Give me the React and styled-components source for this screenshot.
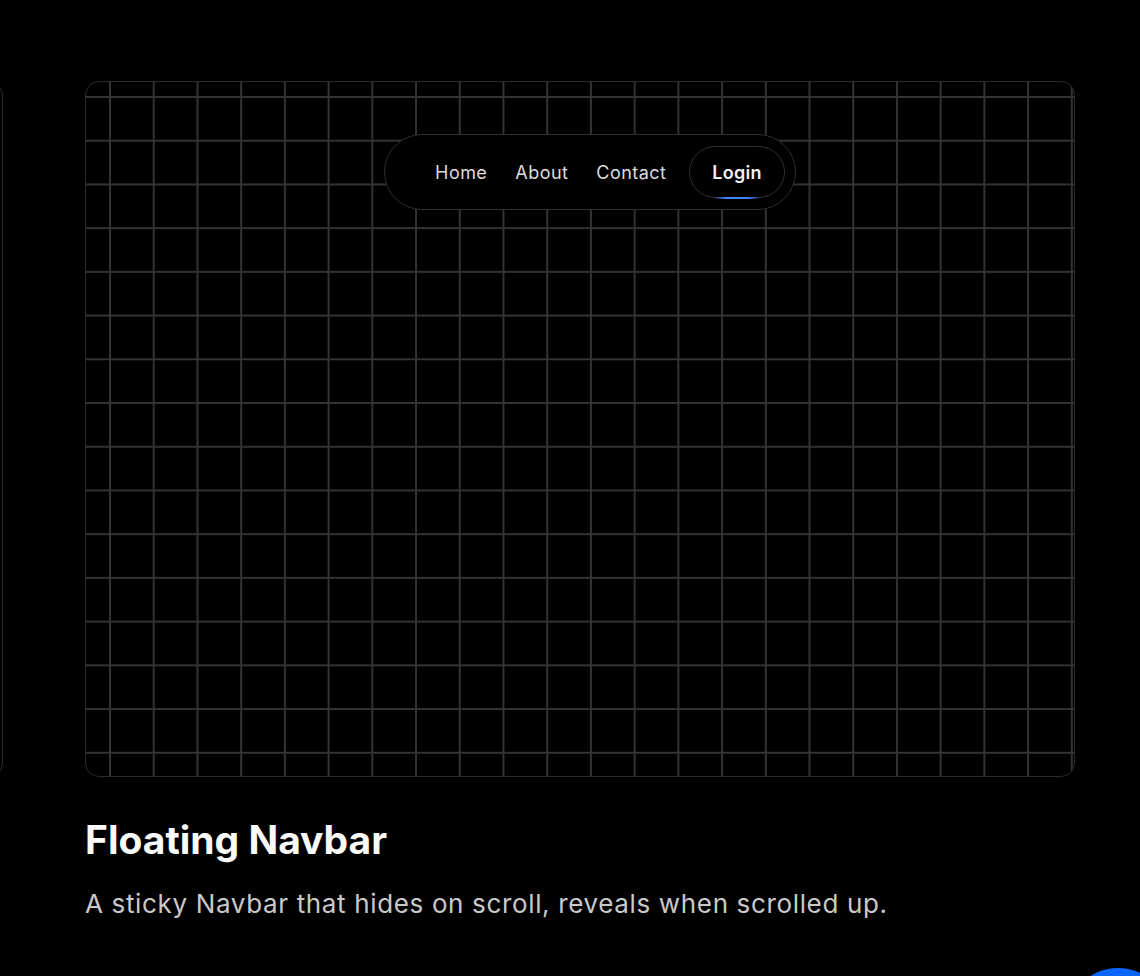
import React from "react";
import styled, { createGlobalStyle, css } from "styled-components";

const Global = createGlobalStyle`
  html, body { margin: 0; padding: 0; background: #000; }
  body { font-family: Inter, "Noto Sans", sans-serif; color: #fff; overflow: hidden; }
  * { box-sizing: border-box; }
`;

const Page = styled.main`
  width: 1140px;
  height: 976px;
  overflow: hidden;
  padding-top: 81px;
`;

const Track = styled.div`
  display: flex;
  gap: 82px;
  transform: translateX(${(p) => p.$offset}px);
`;

const Slide = styled.section`
  flex: 0 0 990px;
  display: flex;
  flex-direction: column;
`;

const Preview = styled.div`
  position: relative;
  height: 696px;
  border: 1px solid #2a2a2a;
  border-radius: 14px;
  overflow: hidden;
  background-color: #000;
  ${(p) =>
    p.$grid &&
    css`
      background-image:
        linear-gradient(to right, #333 1.5px, transparent 1.5px),
        linear-gradient(to bottom, #333 1.5px, transparent 1.5px);
      background-size: 43.73px 43.73px;
      background-position: 23px 14px;
    `}
  display: flex;
  justify-content: center;
  align-items: flex-start;
  padding-top: 52px;
`;

const Nav = styled.nav`
  display: flex;
  align-items: center;
  height: 76px;
  padding: 0 10px 0 36px;
  margin-left: 20px;
  background: #000;
  border: 1.5px solid #2e2e2e;
  border-radius: 999px;
`;

const NavLink = styled.a`
  padding: 0 14px;
  font-size: 18px;
  color: #dcdcdc;
  text-decoration: none;
  letter-spacing: 0.45px;
`;

const LoginButton = styled.button`
  position: relative;
  margin-left: 9px;
  height: 52px;
  padding: 0 22px;
  border-radius: 999px;
  border: 1.5px solid #313131;
  background: #000;
  color: #f2f2f2;
  font-family: Inter, "Noto Sans", sans-serif;
  font-size: 18px;
  font-weight: 600;
  letter-spacing: 0.3px;

  &::after {
    content: "";
    position: absolute;
    left: 50%;
    bottom: -1.5px;
    width: 46px;
    height: 2px;
    transform: translateX(-50%);
    background: linear-gradient(to right, transparent, #3d7eff 25%, #4a88ff 50%, #3d7eff 75%, transparent);
  }
`;

const Title = styled.h2`
  margin: 40px 0 0;
  font-size: 39px;
  font-weight: 700;
  line-height: 46px;
  color: #fafafa;
  letter-spacing: 0px;
`;

const Description = styled.p`
  margin: 23px 0 0;
  font-size: 26px;
  line-height: 36px;
  color: #c9c9c9;
  font-weight: 400;
  letter-spacing: 0.65px;
`;

const Fab = styled.div`
  position: fixed;
  left: 1066px;
  top: 968px;
  width: 104px;
  height: 104px;
  border-radius: 50%;
  background: #0a66ff;
`;

function Card({ featured }) {
  return (
    <Slide>
      <Preview $grid={featured}>
        {featured && (
          <Nav>
            <NavLink href="#">Home</NavLink>
            <NavLink href="#">About</NavLink>
            <NavLink href="#">Contact</NavLink>
            <LoginButton>Login</LoginButton>
          </Nav>
        )}
      </Preview>
      {featured && (
        <>
          <Title>Floating Navbar</Title>
          <Description>A sticky Navbar that hides on scroll, reveals when scrolled up.</Description>
        </>
      )}
    </Slide>
  );
}

export default function App() {
  return (
    <>
      <Global />
      <Page>
        <Track $offset={-987}>
          <Card />
          <Card featured />
          <Card />
        </Track>
      </Page>
      <Fab />
    </>
  );
}
